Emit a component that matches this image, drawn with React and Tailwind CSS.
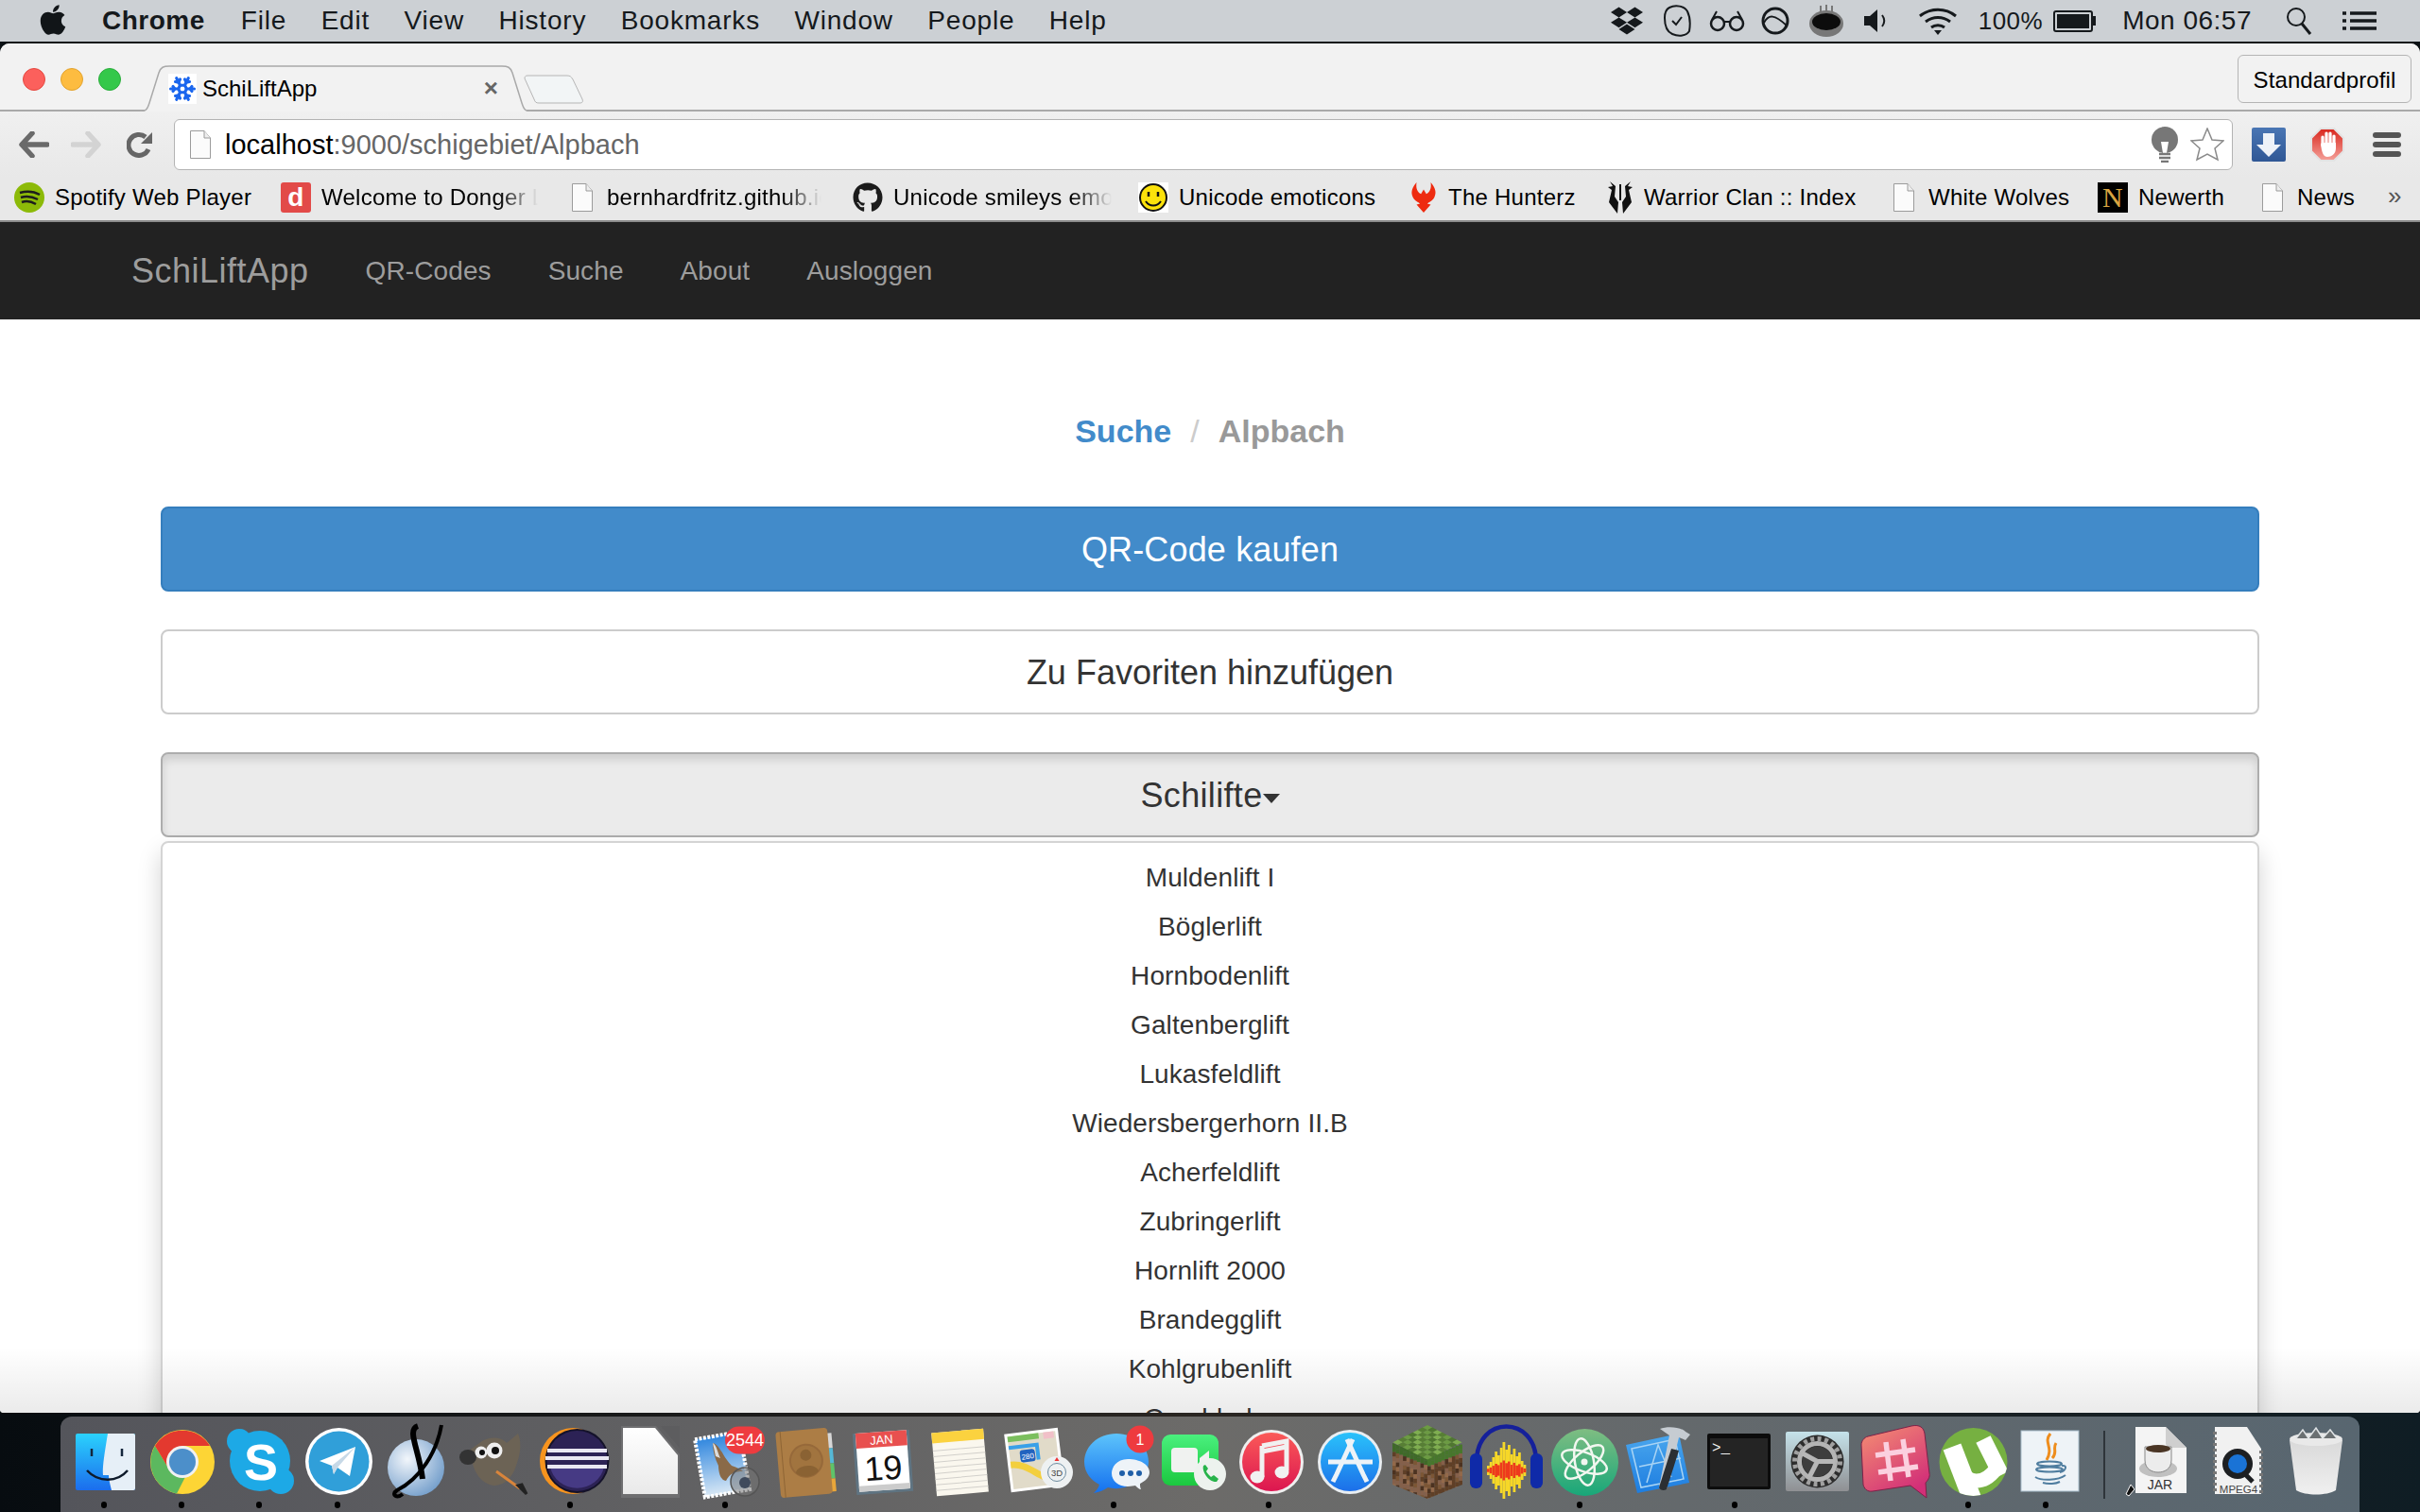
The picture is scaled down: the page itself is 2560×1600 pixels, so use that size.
import { FaApple, FaDropbox, FaGithub } from 'react-icons/fa';
import { Snowflake } from 'lucide-react';

const DocIcon = ({ className }) => (
  <svg viewBox="0 0 22 30" className={className}>
    <path d="M.5.5H15L21.5 8V29.5H.5Z" fill="#fbfbfb" stroke="#9b9b9b" />
    <path d="M15 .5V8H21.5" fill="#eee" stroke="#9b9b9b" />
  </svg>
);

const Stop = ({ a, b, id, x2 = 0, y2 = 1 }) => (
  <linearGradient id={id} x1="0" y1="0" x2={x2} y2={y2}>
    <stop offset="0" stopColor={a} />
    <stop offset="1" stopColor={b} />
  </linearGradient>
);

/* ---------- dock icons, drawn in an 82x85 box ---------- */
const Finder = () => (
  <>
    <defs><Stop id="fi" a="#2bd2fd" b="#1b6ded" /></defs>
    <rect x="11" y="12" width="63" height="60" rx="2" fill="url(#fi)" />
    <path d="M45 12H72a2 2 0 0 1 2 2V70a2 2 0 0 1-2 2H49C47 64 46 60 46 56H40C39 48 42 30 45 12Z" fill="#e6eff7" />
    <path d="M28 28v8M60 28v8" stroke="#14263c" strokeWidth="2.5" />
    <path d="M23 51C35 64 55 64 66 51" fill="none" stroke="#0e1a2a" strokeWidth="2.5" />
  </>
);

const Chrome = () => (
  <>
    <circle cx="42" cy="42" r="34" fill="#fdd535" />
    <path d="M13 25A34 34 0 0 0 36 75.5L49 50H28Z" fill="#5cb85f" />
    <path d="M13 25A34 34 0 0 1 71 25H42L28 50Z" fill="#e3392f" />
    <circle cx="42" cy="42" r="17" fill="#f1f1f1" />
    <circle cx="42" cy="42" r="14" fill="#4c8fca" />
  </>
);

const Skype = () => (
  <>
    <g fill="#1da9e6">
      <circle cx="42" cy="41" r="32" />
      <circle cx="20" cy="20" r="13" />
      <circle cx="64" cy="62" r="14" />
    </g>
    <text x="43" y="61" textAnchor="middle" fontSize="54" fontWeight="700" fill="#fff">S</text>
  </>
);

const Telegram = () => (
  <>
    <circle cx="42.5" cy="41.5" r="35.5" fill="#fff" />
    <circle cx="42.5" cy="41.5" r="32" fill="#309fd9" />
    <path d="M22 41 60 26 54 57 41 48 37 55 35 46Z" fill="#fff" />
    <path d="M35 46 60 26 41 48 37 55Z" fill="#c7d9e7" />
  </>
);

const Vector = () => (
  <>
    <defs>
      <radialGradient id="vb" cx="0.35" cy="0.35" r="0.75">
        <stop offset="0" stopColor="#f2f6fb" />
        <stop offset="1" stopColor="#6f9bc9" />
      </radialGradient>
    </defs>
    <circle cx="42" cy="48" r="30" fill="url(#vb)" />
    <path d="M69 3C64 32 46 60 22 72C15 77 22 81 28 76" fill="none" stroke="#000" strokeWidth="4" />
    <path d="M44 4C32 8 45 28 49 60" fill="none" stroke="#000" strokeWidth="6" />
  </>
);

const Gimp = () => (
  <>
    <path d="M16 30L30 20C38 15 50 15 56 22L68 12C73 24 69 38 66 46C62 60 50 70 38 66C28 63 22 52 20 44Z" fill="#6c6355" />
    <ellipse cx="15" cy="37" rx="9" ry="8" fill="#333" />
    <circle cx="29" cy="32" r="6.500" fill="#eee" /><circle cx="30" cy="32" r="3" fill="#111" />
    <circle cx="43" cy="30" r="8.500" fill="#eee" /><circle cx="44" cy="30" r="4" fill="#111" />
    <path d="M45 52L70 70" stroke="#d9853b" strokeWidth="3" />
    <path d="M68 67L77 76L72 66Z" fill="#222" stroke="#222" strokeWidth="3" />
  </>
);

const Eclipse = () => (
  <>
    <circle cx="44" cy="41" r="35" fill="#f7941e" />
    <circle cx="48.5" cy="41" r="34" fill="#14122a" />
    <circle cx="48.5" cy="41" r="32" fill="#2c2255" />
    <path d="M20 47A29 28 0 0 0 77 47Z" fill="#463a84" />
    <path d="M17 30H80M15 38H82M17 47H80" stroke="#e9e7f2" strokeWidth="4" />
  </>
);

const LibreDoc = () => (
  <>
    <path d="M55 4H75V27Z" fill="#5d5d5f" />
    <path d="M13 4H50L75 34V80H13Z" fill="#6e6e70" />
    <defs><Stop id="ld" a="#fff" b="#e9e9e9" /></defs>
    <path d="M15 6H49L73 35V76H15Z" fill="url(#ld)" />
  </>
);

const Badge = ({ x, y, w, h, text, size }) => (
  <>
    <rect x={x - w / 2} y={y - h / 2} width={w} height={h} rx={h / 2} fill="#ee3b3f" />
    <text x={x} y={y + size * 0.36} textAnchor="middle" fontSize={size} fill="#fff">{text}</text>
  </>
);

const Mail = () => (
  <>
    <defs><Stop id="ms" a="#2f86de" b="#d9e8f5" /></defs>
    <g transform="rotate(-10 42 44)">
      <rect x="14" y="13" width="48" height="62" fill="url(#ms)" stroke="#fff" strokeWidth="4" strokeDasharray="3 1.5" />
    </g>
    <path d="M28 22C36 24 38 36 48 46C54 48 58 50 60 52C52 52 46 54 42 62C36 62 34 52 34 46C30 38 28 30 28 22Z" fill="#8a6a48" />
    <path d="M28 22C32 24 33 32 36 38L31 36Z" fill="#ddd" />
    <circle cx="62" cy="63" r="15" fill="#767676" fillOpacity="0.55" stroke="#555" strokeWidth="1.5" />
    <circle cx="62" cy="64" r="6" fill="#3f4a5c" />
    <Badge x={62} y={19} w={42} h={29} text="2544" size={18} />
  </>
);

const Contacts = () => (
  <g transform="rotate(-5 42 42)">
    <rect x="68" y="14" width="6" height="16" fill="#d7d7d7" />
    <rect x="68" y="30" width="6" height="16" fill="#55b8d6" />
    <rect x="68" y="46" width="6" height="16" fill="#5ec46a" />
    <rect x="68" y="62" width="6" height="14" fill="#e9a63a" />
    <rect x="15" y="8" width="55" height="70" rx="4" fill="#ac7d45" />
    <path d="M20 8V78" stroke="#8e6535" />
    <circle cx="45" cy="41" r="17" fill="#a1743f" stroke="#96693a" strokeWidth="2" />
    <circle cx="45" cy="35" r="6" fill="#8a6233" />
    <path d="M33 53C34 44 56 44 57 53A17 17 0 0 1 33 53Z" fill="#8a6233" />
  </g>
);

const Calendar = () => (
  <g transform="rotate(-4 43 42)">
    <rect x="13" y="10" width="60" height="65" fill="#5f7482" />
    <rect x="16" y="10" width="54" height="62" fill="#fff" />
    <rect x="16" y="10" width="54" height="16" fill="#e8504f" />
    <text x="43" y="23" textAnchor="middle" fontSize="13" fill="#fff">JAN</text>
    <text x="43" y="61" textAnchor="middle" fontSize="36" fill="#111">19</text>
    <rect x="16" y="66" width="54" height="6" fill="#ccc" />
  </g>
);

const Notes = () => (
  <g transform="rotate(-5 43 42)">
    <rect x="15" y="9" width="55" height="67" fill="#faf7ee" />
    <rect x="15" y="9" width="55" height="11" fill="#fbd23f" />
    <path d="M15 28H70M15 34H70M15 40H70M15 46H70M15 52H70M15 58H70M15 64H70M15 70H70" stroke="#d2d0cb" />
  </g>
);

const Maps = () => (
  <>
    <g transform="rotate(-7 40 42)">
      <rect x="11" y="9" width="57" height="62" fill="#fff" />
      <rect x="14" y="12" width="51" height="56" fill="#e1dbc9" />
      <rect x="14" y="12" width="33" height="6" fill="#7bbf5e" />
      <rect x="52" y="12" width="11" height="7" fill="#f1c0c8" />
      <path d="M14 24H44V40" fill="none" stroke="#3aa0e8" strokeWidth="4" />
      <path d="M14 42C30 42 40 56 50 60" fill="none" stroke="#f3cf3e" strokeWidth="7" />
      <rect x="25" y="28" width="16" height="13" rx="3" fill="#2263bf" />
      <text x="33" y="38" textAnchor="middle" fontSize="8" fill="#fff">280</text>
    </g>
    <circle cx="63" cy="53" r="17" fill="#eef1f2" />
    <circle cx="63" cy="53" r="9.5" fill="none" stroke="#6d8ca0" />
    <text x="63" y="57" textAnchor="middle" fontSize="9.5" fill="#444">3D</text>
    <path d="M63 37l2.500 4h-5z" fill="#e33" />
  </>
);

const Messages = () => (
  <>
    <defs><Stop id="mb" a="#5dc4fb" b="#1470ef" /></defs>
    <path d="M44 12C24 12 10 26 10 42C10 54 18 62 26 66C25 70 22 73 20 75C26 74 31 72 35 69C52 74 78 62 78 42C78 26 64 12 44 12Z" fill="url(#mb)" />
    <path d="M56 39C44 39 39 48 39 54C39 62 46 68 56 68C60 68 62 67 64 67C66 69 68 71 70 71C69 69 69 67 69 65C75 62 79 58 79 53C79 45 69 39 56 39Z" fill="#eef3f8" />
    <g fill="#1f5fa8"><circle cx="50" cy="54" r="3" /><circle cx="59" cy="54" r="3" /><circle cx="68" cy="54" r="3" /></g>
    <Badge x={69} y={18} w={29} h={29} text="1" size={16} />
  </>
);

const FaceTime = () => (
  <>
    <defs><Stop id="ft" a="#4af07e" b="#1bc83f" /></defs>
    <rect x="10" y="13" width="60" height="54" rx="9" fill="url(#ft)" />
    <rect x="20" y="27" width="28" height="26" rx="4" fill="#f0f2f0" />
    <path d="M50 38L60 30V50L50 43Z" fill="#f0f2f0" />
    <circle cx="61" cy="55" r="17" fill="#edf2ee" />
    <path d="M54 46C52 52 60 64 68 63L70 60L65 56L62 58C60 56 58 54 57 52L59 49L56 45Z" fill="#27b34a" />
  </>
);

const ITunes = () => (
  <>
    <defs><Stop id="it" a="#fb5a58" b="#dc1650" /></defs>
    <circle cx="44" cy="42" r="34" fill="#efefef" />
    <circle cx="44" cy="42" r="31" fill="url(#it)" />
    <path d="M34 25L60 20V51" fill="none" stroke="#f1f1f1" strokeWidth="5" />
    <path d="M34 25V58" stroke="#f1f1f1" strokeWidth="5" />
    <path d="M34 31L60 26" stroke="#f1f1f1" strokeWidth="5" />
    <ellipse cx="29" cy="58" rx="7.500" ry="6.500" fill="#f1f1f1" />
    <ellipse cx="55" cy="53" rx="7.500" ry="6.500" fill="#f1f1f1" />
  </>
);

const AppStore = () => (
  <>
    <defs><Stop id="as" a="#2ac2fb" b="#1c6fe9" /></defs>
    <circle cx="44" cy="42" r="34" fill="#e9eef2" />
    <circle cx="44" cy="42" r="31" fill="url(#as)" />
    <path d="M47 18L30 55L26 63" fill="none" stroke="#edf3f8" strokeWidth="5" />
    <path d="M41 18L58 55L62 63" fill="none" stroke="#edf3f8" strokeWidth="5" />
    <path d="M21 42H68" stroke="#edf3f8" strokeWidth="5" />
  </>
);

const Minecraft = () => {
  const grass = ['#6c9b43', '#577f34', '#7fae50', '#4f7730'];
  const dirt = ['#7c5635', '#5f3f26', '#93694a', '#4c3220', '#85604a'];
  const leftCells = [];
  const rightCells = [];
  for (let c = 0; c < 10; c++) {
    for (let r = 0; r < 12; r++) {
      const n = (c * 7 + r * 13 + c * r) % 5;
      const ly = 22 + r * 4.8 + c * 1.5;
      const ry = 37 + r * 4.8 - c * 1.5;
      leftCells.push(<rect key={`${c}-${r}`} x={7 + c * 3.7} y={ly} width="3.8" height="4.9" fill={r < 2 ? '#3f6a28' : dirt[n]} />);
      rightCells.push(<rect key={`${c}-${r}`} x={44 + c * 3.7} y={ry} width="3.8" height="4.9" fill={r < 2 ? '#47772c' : dirt[(n + 2) % 5]} />);
    }
  }
  const tops = [];
  for (let i = 0; i < 7; i++) {
    for (let j = 0; j < 7; j++) {
      const cx = 44 + (i - j) * 5.2;
      const cy = 3 + (i + j) * 2.6;
      tops.push(<path key={`t${i}${j}`} d={`M${cx} ${cy}l5.300 2.700-5.300 2.700-5.300-2.700z`} fill={grass[(i * 3 + j * 5) % 4]} />);
    }
  }
  return (
    <>
      <defs>
        <clipPath id="mc"><path d="M7 22L44 37V81L7 66Z" /></clipPath>
        <clipPath id="mc2"><path d="M81 22L44 37V81L81 66Z" /></clipPath>
      </defs>
      <g clipPath="url(#mc)">{leftCells}</g>
      <g clipPath="url(#mc2)">{rightCells}</g>
      {tops}
    </>
  );
};

const Audacity = () => {
  const heights = [5, 9, 14, 20, 16, 24, 30, 22, 27, 17, 23, 15, 19, 10, 6];
  return (
    <>
      <path d="M14 42C14 -8 77 -8 77 42" fill="none" stroke="#15209a" strokeWidth="4.500" />
      <rect x="7" y="33" width="13" height="37" rx="6" fill="#0f2aa8" />
      <rect x="71" y="33" width="13" height="37" rx="6" fill="#0f2aa8" />
      {heights.map((h, i) => (
        <g key={i}>
          <rect x={25 + i * 2.75} y={51 - h} width="2.800" height={h * 2} fill="#f6d728" />
          <rect x={25 + i * 2.75} y={51 - h * 0.35} width="2.800" height={h * 0.7} fill="#ee3a1c" />
        </g>
      ))}
    </>
  );
};

const Atom = () => (
  <>
    <defs><Stop id="at" a="#7fbd82" b="#18a779" /></defs>
    <ellipse cx="46.500" cy="42.500" rx="35.500" ry="35.500" fill="url(#at)" />
    <g fill="none" stroke="#f2f7f0" strokeWidth="2.500">
      <ellipse cx="46" cy="42" rx="25" ry="10" transform="rotate(20 46 42)" />
      <ellipse cx="46" cy="42" rx="25" ry="10" transform="rotate(80 46 42)" />
      <ellipse cx="46" cy="42" rx="25" ry="10" transform="rotate(140 46 42)" />
    </g>
    <circle cx="46" cy="42" r="3.500" fill="#f2f7f0" />
  </>
);

const Xcode = () => (
  <>
    <defs><Stop id="xc" a="#4aa7ee" b="#1d7de0" /></defs>
    <path d="M8 24L64 12L75 64L20 75Z" fill="url(#xc)" />
    <g fill="none" stroke="#a9d4f4" strokeWidth="1.500">
      <path d="M14 28L60 18L69 60L24 69Z" />
      <path d="M30 64L42 24L56 58M22 47L66 38" />
    </g>
    <path d="M44 7C52 4 66 5 71 10L76 13L71 19L64 16L51 71L43 69L54 14C50 11 47 9 44 7Z" fill="#c6ccd2" />
    <path d="M56 28L64 30L51 71C48 73 44 72 43 69Z" fill="#2b2f33" />
  </>
);

const Terminal = () => (
  <>
    <rect x="12" y="12" width="67" height="59" rx="2" fill="#0c0c0c" />
    <rect x="15" y="17" width="61" height="51" fill="#242424" />
    <text x="17" y="32" fontSize="16" fill="#f2f2f2" fontFamily="'Liberation Mono',monospace">&gt;_</text>
  </>
);

const SysPrefs = () => (
  <>
    <defs><Stop id="sp" a="#c5e2ea" b="#8f9093" /></defs>
    <rect x="12" y="10" width="67" height="63" rx="2" fill="url(#sp)" />
    <circle cx="45.500" cy="41.500" r="28" fill="#2d2d2d" />
    <circle cx="45.500" cy="41.500" r="24" fill="none" stroke="#a0a0a0" strokeWidth="5" strokeDasharray="4 3.500" />
    <circle cx="45.500" cy="41.500" r="19" fill="none" stroke="#b4b4b4" strokeWidth="5" />
    <circle cx="45.500" cy="41.500" r="16" fill="#3d3d3d" />
    <path d="M45.500 41.500L30 33M45.500 41.500H64M45.500 41.500L37 58" stroke="#b7b7b7" strokeWidth="5" />
  </>
);

const HashChat = () => (
  <>
    <defs><Stop id="hc" a="#f59072" b="#d22f78" x2="0.600" y2="1" /></defs>
    <path d="M17 15L63 4C72 2 76 6 77 12L82 54C83 58 80 62 78 64L79 80L62 67L22 73C16 74 13 70 12 66L10 24C10 20 13 16 17 15Z" fill="url(#hc)" stroke="#7d2148" />
    <path d="M36 21L41 62M54 18L60 58M25 35L67 29M28 53L70 47" stroke="#fbd0df" strokeWidth="5.500" fill="none" />
  </>
);

const Torrent = () => (
  <>
    <circle cx="46.500" cy="42" r="36" fill="#76b041" />
    <clipPath id="ut"><circle cx="46.500" cy="42" r="36" /></clipPath>
    <g clipPath="url(#ut)" fill="none" stroke="#fff" strokeLinecap="butt">
      <path d="M24 26L47 86" strokeWidth="20" />
      <path d="M34 50C40 66 58 66 70 50" strokeWidth="15" />
      <path d="M57 18L76 56" strokeWidth="17" />
    </g>
  </>
);

const JavaCup = ({ x = 0, y = 0 }) => (
  <g transform={`translate(${x} ${y})`}>
    <path d="M46 12C38 22 50 26 42 40M52 22C48 28 54 32 48 38" fill="none" stroke="#ee8d1d" strokeWidth="3" />
    <g fill="none" stroke="#4f7d9f" strokeWidth="2">
      <ellipse cx="45" cy="44" rx="13" ry="2.500" />
      <ellipse cx="45" cy="50" rx="14" ry="2.500" />
      <path d="M58 46C65 45 62 52 56 53" />
      <path d="M30 58C36 62 54 62 62 56M38 64C44 66 52 65 56 63" />
    </g>
  </g>
);

const Java = () => (
  <>
    <rect x="15" y="9" width="61" height="64" fill="#eef3f7" stroke="#a8bdcb" />
    <JavaCup />
  </>
);

const Jar = () => (
  <>
    <path d="M14 5H46L68 27V75H14Z" fill="#f4f4f4" />
    <path d="M46 5L68 27H50C47 27 46 24 46 22Z" fill="#cfcfcf" />
    <ellipse cx="38" cy="49" rx="20" ry="9" fill="#c0c0c0" />
    <path d="M24 26H52V40C52 50 44 53 38 53C32 53 24 50 24 40Z" fill="#ececec" stroke="#888" />
    <ellipse cx="38" cy="28" rx="13" ry="4" fill="#4a3524" />
    <text x="40" y="71" textAnchor="middle" fontSize="14" fill="#333">JAR</text>
    <path d="M4 76L9 66L13 71L7 78Z" fill="#111" stroke="#fff" strokeWidth="1" />
  </>
);

const Mpeg = () => (
  <>
    <path d="M16 5H50L65 28V76H16Z" fill="#f1f1f1" />
    <path d="M16 10V76M65 30V76" stroke="#777" strokeWidth="4" strokeDasharray="3 3" />
    <circle cx="40" cy="44" r="16" fill="#1d1f22" />
    <circle cx="40" cy="44" r="10" fill="#1a73d6" />
    <path d="M47 54L56 63" stroke="#1d1f22" strokeWidth="5" />
    <text x="41" y="75" textAnchor="middle" fontSize="11.5" fill="#444">MPEG4</text>
  </>
);

const Trash = () => (
  <>
    <defs><Stop id="tr" a="#d9d9d9" b="#f0f0f0" /></defs>
    <path d="M13 19H69L62 72C52 78 30 78 20 72Z" fill="url(#tr)" />
    <ellipse cx="41" cy="18" rx="28" ry="7" fill="#e9e9e9" />
    <path d="M20 17L27 8L33 17L41 6L48 17L56 8L63 17" fill="#6b7072" stroke="#dfe3e5" strokeWidth="1.500" />
  </>
);

const dockApps = [
  [Finder, true], [Chrome, true], [Skype, true], [Telegram, true], [Vector, false], [Gimp, false],
  [Eclipse, true], [LibreDoc, false], [Mail, true], [Contacts, false], [Calendar, false], [Notes, false],
  [Maps, false], [Messages, true], [FaceTime, false], [ITunes, true], [AppStore, false], [Minecraft, false],
  [Audacity, false], [Atom, true], [Xcode, false], [Terminal, true], [SysPrefs, false], [HashChat, false],
  [Torrent, true], [Java, true],
];

const DockCell = ({ icon: Icon, running, className }) => (
  <div className={`flex flex-col items-center pt-[6px] shrink-0 ${className}`}>
    <svg viewBox="0 0 82 85" className="w-[82px] h-[85px] overflow-visible"><Icon /></svg>
    <div className={`-mt-px h-[7px] w-[6px] rounded-full ${running ? 'bg-black' : ''}`}></div>
  </div>
);

/* ---------- bookmarks ---------- */
const bookmarks = [
  {
    title: 'Spotify Web Player', w: 'w-[282px]', t: 'w-[212px]',
    icon: (
      <svg viewBox="0 0 32 32" className="w-8 h-8 shrink-0">
        <circle cx="16" cy="16" r="16" fill="#8cba08" />
        <path d="M6 11C13 9 20 9 27 13M7 16C13 14 19 15 25 18M8 21C13 19 18 20 23 23" stroke="#1d1d1d" strokeWidth="2.500" fill="none" />
      </svg>
    ),
  },
  {
    title: 'Welcome to Donger List', w: 'w-[307px]', t: 'w-[229px]', fade: true,
    icon: <div className="w-8 h-8 shrink-0 rounded-[3px] bg-[#e24a48] text-white font-bold text-[28px] leading-8 text-center">d</div>,
  },
  { title: 'bernhardfritz.github.io', w: 'w-[298px]', t: 'w-[227px]', fade: true, file: true },
  {
    title: 'Unicode smileys emoticons', w: 'w-[302px]', t: 'w-[231px]', fade: true,
    icon: <FaGithub className="w-8 h-8 shrink-0 text-[#1b1b1b]" />,
  },
  {
    title: 'Unicode emoticons', w: 'w-[287px]', t: 'w-[212px]',
    icon: (
      <svg viewBox="0 0 32 32" className="w-8 h-8 shrink-0 bg-white">
        <circle cx="16" cy="16" r="14" fill="#fbe20b" stroke="#111" strokeWidth="2" />
        <path d="M11 10v5M21 10v5" stroke="#111" strokeWidth="2.500" />
        <path d="M8 20C12 26 20 26 24 20" fill="none" stroke="#111" strokeWidth="2" />
      </svg>
    ),
  },
  {
    title: 'The Hunterz', w: 'w-[209px]', t: 'w-[134px]',
    icon: (
      <svg viewBox="0 0 32 34" className="w-[30px] h-[34px] shrink-0">
        <path d="M8 0C3 6 1 11 4 17C6 21 10 22 12 24L8 25L16 34L24 25L20 24C22 22 26 21 28 17C31 11 29 6 24 0C25 7 23 11 19 13L16 8L13 13C9 11 7 7 8 0Z" fill="#ee2b10" />
      </svg>
    ),
  },
  {
    title: 'Warrior Clan :: Index', w: 'w-[302px]', t: 'w-[228px]',
    icon: (
      <svg viewBox="0 0 28 34" className="w-7 h-[34px] shrink-0">
        <path d="M3 0L6 5L1 6L5 9L2 22L11 34L12 22L8 16L9 5ZM25 0L22 5L27 6L23 9L26 22L17 34L16 22L20 16L19 5ZM13 3H15V20H13Z" fill="#111" />
      </svg>
    ),
  },
  { title: 'White Wolves', w: 'w-[217px]', t: 'w-[152px]', file: true },
  {
    title: 'Newerth', w: 'w-[173px]', t: 'w-[94px]',
    icon: (
      <div className="w-8 h-8 shrink-0 bg-black text-[#d9a441] text-[30px] leading-8 text-center font-['Liberation_Serif',serif]">N</div>
    ),
  },
  { title: 'News', w: 'w-[120px]', t: 'w-[62px]', file: true },
];

const liftNames = [
  'Muldenlift I', 'Böglerlift', 'Hornbodenlift', 'Galtenberglift', 'Lukasfeldlift', 'Wiedersbergerhorn II.B',
  'Acherfeldlift', 'Zubringerlift', 'Hornlift 2000', 'Brandegglift', 'Kohlgrubenlift', 'Omahbahn',
];

const menuLeft = ['File', 'Edit', 'View', 'History', 'Bookmarks', 'Window', 'People', 'Help'];
const navLinks = ['QR-Codes', 'Suche', 'About', 'Ausloggen'];

const App = () => {
  return (
    <div className="w-[2560px] h-[1600px] overflow-hidden flex flex-col bg-[#0b1114] font-['Liberation_Sans',Arial,sans-serif]">
      {/* Mac menu bar */}
      <div className="h-[44px] shrink-0 bg-[#ccd0d4] flex items-center text-[28px] tracking-[0.5px] text-[#15191c] pl-[40px]">
        <FaApple className="w-[32px] h-[36px] text-[#111518] -mt-[3px]" />
        <span className="font-bold ml-[36px]">Chrome</span>
        <div className="flex gap-[36.5px] ml-[38px] tracking-[0.8px]">
          {menuLeft.map(m => <span key={m}>{m}</span>)}
        </div>
        <div className="ml-auto flex items-center pr-[46px]">
          <FaDropbox className="w-[34px] h-[34px]" />
          <svg viewBox="0 0 32 34" className="w-[32px] h-[34px] ml-[20px]">
            <path d="M8 3C14 0 24 1 27 7C30 13 30 22 29 28C26 33 18 34 11 31C4 28 3 20 3 14C3 9 4 5 8 3Z" fill="none" stroke="#15191c" strokeWidth="2" />
            <path d="M11 17L15 21L21 13" fill="none" stroke="#15191c" strokeWidth="2" />
          </svg>
          <svg viewBox="0 0 38 24" className="w-[38px] h-[24px] ml-[18px]">
            <circle cx="9" cy="15" r="7" fill="none" stroke="#15191c" strokeWidth="2.500" />
            <circle cx="29" cy="15" r="7" fill="none" stroke="#15191c" strokeWidth="2.500" />
            <path d="M16 13H22M3 11L8 2M35 11L30 2" fill="none" stroke="#15191c" strokeWidth="2" />
          </svg>
          <svg viewBox="0 0 30 30" className="w-[30px] h-[30px] ml-[17px]">
            <circle cx="15" cy="15" r="13" fill="none" stroke="#15191c" strokeWidth="3" />
            <path d="M3 17C8 8 14 8 27 20" fill="none" stroke="#15191c" strokeWidth="2" />
          </svg>
          <svg viewBox="0 0 38 34" className="w-[38px] h-[34px] ml-[20px]">
            <ellipse cx="19" cy="20" rx="18" ry="14" fill="#777" />
            <ellipse cx="19" cy="18" rx="15" ry="9" fill="#0c0c0c" />
            <path d="M13 1V7M19 0V7M25 1V7" stroke="#777" strokeWidth="2" />
          </svg>
          <svg viewBox="0 0 26 24" className="w-[26px] h-[24px] ml-[21px]">
            <path d="M0 7H6L14 0V24L6 17H0Z" fill="#15191c" />
            <path d="M19 6C22 10 22 14 19 18" fill="none" stroke="#15191c" strokeWidth="2" />
          </svg>
          <svg viewBox="0 0 42 30" className="w-[42px] h-[30px] ml-[31px]">
            <path d="M2 10C13 1 29 1 40 10M8 16C16 10 26 10 34 16M14 22C18 19 24 19 28 22" fill="none" stroke="#15191c" strokeWidth="3" />
            <path d="M21 30L17 25H25Z" fill="#15191c" />
          </svg>
          <span className="ml-[22px] text-[26px]">100%</span>
          <div className="ml-[11px] w-[42px] h-[23px] border-2 border-[#15191c] rounded-[3px] p-[2px]">
            <div className="w-full h-full bg-[#15191c]"></div>
          </div>
          <div className="w-[3px] h-[10px] bg-[#15191c]"></div>
          <span className="ml-[28px]">Mon 06:57</span>
          <svg viewBox="0 0 28 30" className="w-[28px] h-[30px] ml-[36px]">
            <circle cx="11" cy="11" r="9" fill="none" stroke="#15191c" strokeWidth="2" />
            <path d="M17 18L26 29" stroke="#15191c" strokeWidth="3" />
          </svg>
          <svg viewBox="0 0 36 20" className="w-[36px] h-[20px] ml-[32px]">
            <path d="M0 2H4M8 2H36M0 10H4M8 10H36M0 18H4M8 18H36" stroke="#15191c" strokeWidth="3.500" />
          </svg>
        </div>
      </div>

      {/* Browser window */}
      <div className="mt-[2px] h-[1449px] shrink-0 flex flex-col rounded-t-[10px] rounded-b-[4px] overflow-hidden bg-white">
        {/* tab strip */}
        <div className="h-[72px] shrink-0 bg-[#f2f2f2] border-b-2 border-[#a9a9a9] flex items-start">
          <div className="flex gap-4 pl-[24px] pt-[26px]">
            <div className="w-6 h-6 rounded-full bg-[#fc605c] border border-[#e5483f]"></div>
            <div className="w-6 h-6 rounded-full bg-[#fdbc40] border border-[#e2a32e]"></div>
            <div className="w-6 h-6 rounded-full bg-[#34c84a] border border-[#2aad3b]"></div>
          </div>
          <div className="relative ml-[19px] mt-[23px] w-[416px] h-[49px] flex items-center pl-[31px]">
            <svg viewBox="0 0 416 49" className="absolute inset-0 w-full h-full" preserveAspectRatio="none">
              <path d="M0 49C8 49 9 46 11 40L21 8C23 2 26 1 32 1H384C390 1 393 2 395 8L405 40C407 46 408 49 416 49" fill="#f2f2f2" stroke="#a9a9a9" strokeWidth="1.500" />
            </svg>
            <div className="relative w-[30px] h-8 bg-white flex items-center justify-center">
              <Snowflake className="w-[30px] h-[30px] text-[#1a66ee]" strokeWidth={2.5} />
            </div>
            <span className="relative ml-[6px] text-[24px] text-black">SchiLiftApp</span>
            <span className="relative ml-auto mr-[36px] text-[#666] text-[26px] font-bold">×</span>
          </div>
          <svg viewBox="0 0 64 31" className="w-[64px] h-[31px] -ml-[9px] mt-[33px]">
            <path d="M4 1H46C49 1 50 2 52 5L62 26C63 29 62 30 59 30H16C13 30 12 29 11 26L1 4C1 2 2 1 4 1Z" fill="#f2f5f6" stroke="#b5b5b5" />
          </svg>
          <div className="ml-auto mr-[9px] mt-[12px] w-[184px] h-[51px] pt-[2px] rounded-[6px] border border-[#b5b5b5] bg-[#f2f2f2] flex items-center justify-center text-[24px] tracking-[0.1px] text-black">
            Standardprofil
          </div>
        </div>

        {/* toolbar */}
        <div className="h-[70px] shrink-0 bg-gradient-to-b from-[#f0f0f0] to-[#e8e8e8] flex items-center">
          <svg viewBox="0 0 32 28" className="w-[32px] h-[28px] ml-[20px]">
            <path d="M14 2L3 14L14 26M4 14H30" fill="none" stroke="#6a6a6a" strokeWidth="5.500" strokeLinecap="round" strokeLinejoin="round" />
          </svg>
          <svg viewBox="0 0 32 28" className="w-[32px] h-[28px] ml-[23px]">
            <path d="M18 2L29 14L18 26M28 14H2" fill="none" stroke="#d3d3d3" strokeWidth="5.500" strokeLinecap="round" strokeLinejoin="round" />
          </svg>
          <svg viewBox="0 0 28 28" className="w-[28px] h-[28px] ml-[27px]">
            <path d="M23 19A11 11 0 1 1 20 6" fill="none" stroke="#666" strokeWidth="5" />
            <path d="M27 1V13H15Z" fill="#666" />
          </svg>
          <div className="ml-[22px] w-[2178px] h-[54px] rounded-[6px] border border-[#b3b3b3] bg-white flex items-center pl-[16px]">
            <DocIcon className="w-[22px] h-[30px]" />
            <span className="ml-[15px] pt-[2px] text-[29px] text-black">localhost<span className="text-[#666]">:9000/schigebiet/Alpbach</span></span>
            <svg viewBox="0 0 30 38" className="w-[30px] h-[38px] ml-auto">
              <circle cx="15" cy="14" r="14" fill="#777" />
              <path d="M11 16L13 28H17L19 16" fill="#fff" />
              <path d="M9 29H21M9 33H21M11 37H19" stroke="#777" strokeWidth="2.500" />
            </svg>
            <svg viewBox="0 0 36 36" className="w-[36px] h-[36px] ml-[12px] mr-[8px]">
              <path d="M18 1L23 13L35 14L26 22L29 34L18 28L7 34L10 22L1 14L13 13Z" fill="#fff" stroke="#8a8a8a" strokeWidth="1.500" />
            </svg>
          </div>
          <svg viewBox="0 0 36 36" className="w-[36px] h-[36px] ml-[20px]">
            <defs><Stop id="dl" a="#4a76b4" b="#2f5795" /></defs>
            <rect width="36" height="36" rx="2" fill="url(#dl)" />
            <path d="M12 6H24V18H31L18 31L5 18H12Z" fill="#eef2f8" />
          </svg>
          <svg viewBox="0 0 36 36" className="w-[36px] h-[36px] ml-[26px]">
            <defs><Stop id="ab" a="#d9261c" b="#f4a19a" /></defs>
            <path d="M11 1H25L35 11V25L25 35H11L1 25V11Z" fill="url(#ab)" stroke="#e3e3e3" strokeWidth="2" />
            <path d="M13 19V10M17 17V6M21 17V6M25 19V9" stroke="#fff" strokeWidth="3.200" strokeLinecap="round" />
            <path d="M11 17L13 16H27V22C27 28 22 31 18 31C14 31 12 27 11 17Z" fill="#fff" />
          </svg>
          <div className="ml-[30px] w-[30px] flex flex-col gap-[4px]">
            <div className="h-[6px] rounded-[3px] bg-[#555]"></div>
            <div className="h-[6px] rounded-[3px] bg-[#555]"></div>
            <div className="h-[6px] rounded-[3px] bg-[#555]"></div>
          </div>
        </div>

        {/* bookmarks bar */}
        <div className="h-[47px] shrink-0 bg-[#e8e8e8] border-b-2 border-[#8c8c8c] flex items-start pl-[15px] pt-[3px] text-[24px] tracking-[0.25px] text-black">
          {bookmarks.map(b => (
            <div key={b.title} className={`flex items-center gap-[11px] shrink-0 ${b.w}`}>
              {b.file ? <DocIcon className="w-[22px] h-[30px] shrink-0 ml-[1px] mr-[4px]" /> : b.icon}
              <span className={`whitespace-nowrap overflow-hidden ${b.t} ${b.fade ? '[mask-image:linear-gradient(to_right,black_82%,transparent)]' : ''}`}>{b.title}</span>
            </div>
          ))}
          <span className="text-[26px] text-[#555] ml-[14px] -mt-[3px]">»</span>
        </div>

        {/* page */}
        <div className="relative flex-1 min-h-0 overflow-hidden bg-white">
          <nav className="h-[103px] bg-[#222] flex items-center pl-[139px] text-[#9d9d9d]">
            <span className="text-[36px] tracking-[0.5px] mr-[30px]">SchiLiftApp</span>
            {navLinks.map(l => <span key={l} className="text-[28px] tracking-[0.1px] px-[30px]">{l}</span>)}
          </nav>
          <div className="pl-[170px] pr-[170px]">
            <div className="mt-[98px] h-[40px] flex items-center justify-center text-[34px] font-bold text-[#999]">
              <span className="text-[#428bca]">Suche</span>
              <span className="mx-[20px] font-normal text-[#ccc]">/</span>
              <span>Alpbach</span>
            </div>
            <div className="mt-[60px] h-[90px] pt-[2px] rounded-[8px] border-2 border-[#357ebd] bg-[#428bca] text-white text-[36px] tracking-[0.15px] flex items-center justify-center">
              QR-Code kaufen
            </div>
            <div className="mt-[40px] h-[90px] pt-[2px] rounded-[8px] border-2 border-[#ccc] bg-white text-[#333] text-[36px] flex items-center justify-center">
              Zu Favoriten hinzufügen
            </div>
            <div className="mt-[40px] h-[90px] pt-[2px] rounded-[8px] border-2 border-[#adadad] bg-[#ebebeb] shadow-[inset_0_6px_10px_rgba(0,0,0,0.125)] text-[#333] text-[36px] tracking-[0.330px] flex items-center justify-center">
              Schilifte
              <span className="mt-[6px] border-x-[9px] border-x-transparent border-t-[10px] border-t-[#333]"></span>
            </div>
            <div className="mt-[4px] rounded-[8px] border-2 border-[#d4d4d4] bg-white py-[10px] shadow-[0_12px_24px_rgba(0,0,0,0.175)]">
              {liftNames.map(n => (
                <div key={n} className="h-[52px] pt-[1px] flex items-center justify-center text-[28px] tracking-[0.1px] text-[#333]">{n}</div>
              ))}
            </div>
          </div>
          {/* dock shadow falling onto the page */}
          <div className="absolute inset-x-0 bottom-0 h-[70px] bg-gradient-to-b from-transparent to-black/8 pointer-events-none"></div>
        </div>
      </div>

      {/* Dock */}
      <div className="flex-1 min-h-0 pt-[4px] pl-[64px] pr-[64px] bg-gradient-to-r from-[#070c10] via-[#2a2622] to-[#0f1d24]">
        <div className="h-[101px] w-[2432px] rounded-t-[12px] flex pl-[5px] bg-gradient-to-r from-[#54555b] via-[#6c6b69] to-[#586670]">
          {dockApps.map(([Icon, running], i) => (
            <DockCell key={i} icon={Icon} running={running} className="w-[82.16px]" />
          ))}
          <div className="ml-[20px] mt-[15px] w-[2px] h-[72px] bg-[#2e353a] shrink-0"></div>
          <DockCell icon={Jar} className="w-[82px] ml-[18px]" />
          <DockCell icon={Mpeg} className="w-[82px]" />
          <DockCell icon={Trash} className="w-[82px]" />
        </div>
      </div>
    </div>
  );
};

export default App;
